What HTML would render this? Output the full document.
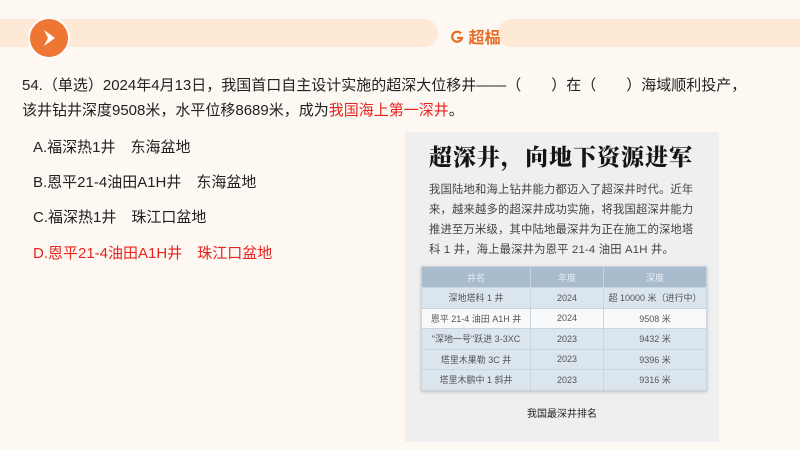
<!DOCTYPE html>
<html><head><meta charset="utf-8"><style>
*{margin:0;padding:0;box-sizing:border-box}
body{width:800px;height:450px;background:#fdf8f2;position:relative;overflow:hidden;font-family:"Liberation Sans","Noto Sans CJK SC",sans-serif;color:#222}
.band{position:absolute;top:19px;height:28px;background:#fde9d6;border-radius:14px}
.circ{position:absolute;left:28px;top:17px;width:42px;height:42px;border-radius:50%;background:#ee7633;border:2px solid #fff}
.logo{position:absolute;left:450px;top:24px;color:#ea6a25;font-weight:bold;font-size:16px}
.q{position:absolute;left:22px;top:73px;font-size:15px;line-height:25px;width:770px}
.r{color:#e8231f}
.opt{position:absolute;left:33px;font-size:15px}
.panel{position:absolute;left:405px;top:132px;width:314px;height:310px;background:#efefef}
.t{position:absolute;left:24px;top:7px;font-size:23px;font-weight:900;color:#151515;font-family:"Noto Serif CJK SC",serif;letter-spacing:1px}
.p{position:absolute;left:24px;top:48px;width:272px;font-size:11.3px;line-height:20px;color:#444;letter-spacing:.2px}
table{position:absolute;left:16px;top:134px;width:286px;border-collapse:collapse;font-size:9px;color:#555;text-align:center;box-shadow:0 1px 3px #bbb}
td,th{height:20.5px;border:1px solid #c9d4de}
th{background:#a8bccd;color:#e9eef3;font-weight:normal;height:21px}
td{background:#dbe5ee}
tr.w td{background:#f7f9fb}
.cap{position:absolute;left:0;width:314px;top:273px;text-align:center;font-size:10px;color:#222}
</style></head><body>
<div class="band" style="left:-14px;width:452px"></div>
<div class="band" style="left:498px;width:320px"></div>
<div class="circ"><svg width="38" height="38" viewBox="0 0 38 38"><path d="M14 11 L25 19 L14 27 L18 19 Z" fill="#fff"/></svg></div>
<div class="logo"><svg width="14" height="14" viewBox="0 0 14 14" style="vertical-align:-1px"><path d="M11 3.5 A5 5 0 1 0 12 8 H7" fill="none" stroke="#ea6a25" stroke-width="2.2"/></svg> 超榀</div>
<div class="q">54.（单选）2024年4月13日，我国首口自主设计实施的超深大位移井——（　　）在（　　）海域顺利投产，<br>该井钻井深度9508米，水平位移8689米，成为<span class="r">我国海上第一深井</span>。</div>
<div class="opt" style="top:136px">A.福深热1井　东海盆地</div>
<div class="opt" style="top:171px">B.恩平21-4油田A1H井　东海盆地</div>
<div class="opt" style="top:206px">C.福深热1井　珠江口盆地</div>
<div class="opt r" style="top:242px">D.恩平21-4油田A1H井　珠江口盆地</div>
<div class="panel">
<div class="t">超深井，向地下资源进军</div>
<div class="p">我国陆地和海上钻井能力都迈入了超深井时代。近年来，越来越多的超深井成功实施，将我国超深井能力推进至万米级，其中陆地最深井为正在施工的深地塔科 1 井，海上最深井为恩平 21-4 油田 A1H 井。</div>
<table>
<tr><th style="width:109px">井名</th><th style="width:73px">年度</th><th>深度</th></tr>
<tr><td>深地塔科 1 井</td><td>2024</td><td>超 10000 米（进行中）</td></tr>
<tr class="w"><td>恩平 21-4 油田 A1H 井</td><td>2024</td><td>9508 米</td></tr>
<tr><td>"深地一号"跃进 3-3XC</td><td>2023</td><td>9432 米</td></tr>
<tr><td>塔里木果勒 3C 井</td><td>2023</td><td>9396 米</td></tr>
<tr><td>塔里木鹏中 1 斜井</td><td>2023</td><td>9316 米</td></tr>
</table>
<div class="cap">我国最深井排名</div>
</div>
</body></html>
